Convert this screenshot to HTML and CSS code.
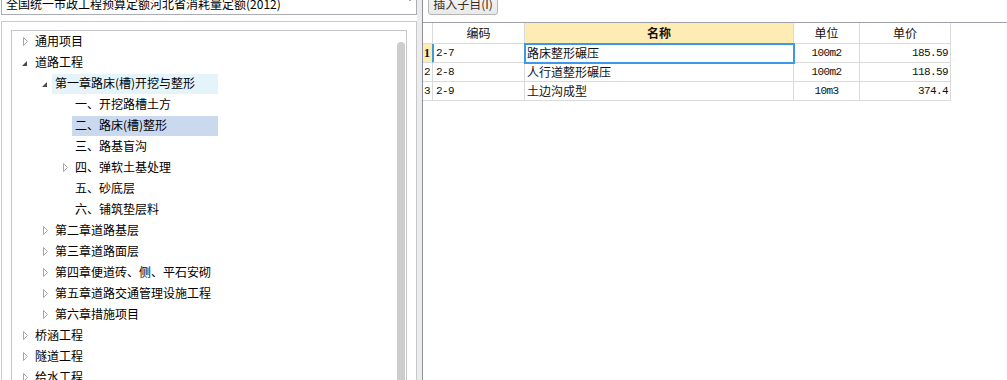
FILE: index.html
```html
<!DOCTYPE html>
<html lang="zh-CN">
<head>
<meta charset="utf-8">
<title>定额库</title>
<link rel="stylesheet" href="styles.css">
</head>
<body>
<div class="left">
  <div class="combo-wrap">
    <div class="combo">
      <span class="combo-text">全国统一市政工程预算定额河北省消耗量定额(2012)</span>
      <svg class="combo-arrow" width="6" height="4" viewBox="0 0 6 4"><path d="M0 0 H6 L3 3 Z" fill="#555"/></svg>
    </div>
  </div>
  <div class="outer">
    <div class="tree-box">
      <div class="tree">
        <div class="row l0"><span class="tw c"><svg width="6" height="9" viewBox="0 0 6 9"><path d="M0.5 0.5 L4.5 4.5 L0.5 8.5 Z" fill="none" stroke="#a6a6a6"/></svg></span><span class="lbl">通用项目</span></div>
        <div class="row l0"><span class="tw e"><svg width="6" height="6" viewBox="0 0 6 6"><path d="M5 0 V5 H0 Z" fill="#4a4a4a"/></svg></span><span class="lbl">道路工程</span></div>
        <div class="row l1"><span class="tw e"><svg width="6" height="6" viewBox="0 0 6 6"><path d="M5 0 V5 H0 Z" fill="#4a4a4a"/></svg></span><span class="lbl hover">第一章路床(槽)开挖与整形</span></div>
        <div class="row l2"><span class="tw"></span><span class="lbl">一、开挖路槽土方</span></div>
        <div class="row l2"><span class="tw"></span><span class="lbl sel">二、路床(槽)整形</span></div>
        <div class="row l2"><span class="tw"></span><span class="lbl">三、路基盲沟</span></div>
        <div class="row l2"><span class="tw c"><svg width="6" height="9" viewBox="0 0 6 9"><path d="M0.5 0.5 L4.5 4.5 L0.5 8.5 Z" fill="none" stroke="#a6a6a6"/></svg></span><span class="lbl">四、弹软土基处理</span></div>
        <div class="row l2"><span class="tw"></span><span class="lbl">五、砂底层</span></div>
        <div class="row l2"><span class="tw"></span><span class="lbl">六、铺筑垫层料</span></div>
        <div class="row l1"><span class="tw c"><svg width="6" height="9" viewBox="0 0 6 9"><path d="M0.5 0.5 L4.5 4.5 L0.5 8.5 Z" fill="none" stroke="#a6a6a6"/></svg></span><span class="lbl">第二章道路基层</span></div>
        <div class="row l1"><span class="tw c"><svg width="6" height="9" viewBox="0 0 6 9"><path d="M0.5 0.5 L4.5 4.5 L0.5 8.5 Z" fill="none" stroke="#a6a6a6"/></svg></span><span class="lbl">第三章道路面层</span></div>
        <div class="row l1"><span class="tw c"><svg width="6" height="9" viewBox="0 0 6 9"><path d="M0.5 0.5 L4.5 4.5 L0.5 8.5 Z" fill="none" stroke="#a6a6a6"/></svg></span><span class="lbl">第四章便道砖、侧、平石安砌</span></div>
        <div class="row l1"><span class="tw c"><svg width="6" height="9" viewBox="0 0 6 9"><path d="M0.5 0.5 L4.5 4.5 L0.5 8.5 Z" fill="none" stroke="#a6a6a6"/></svg></span><span class="lbl">第五章道路交通管理设施工程</span></div>
        <div class="row l1"><span class="tw c"><svg width="6" height="9" viewBox="0 0 6 9"><path d="M0.5 0.5 L4.5 4.5 L0.5 8.5 Z" fill="none" stroke="#a6a6a6"/></svg></span><span class="lbl">第六章措施项目</span></div>
        <div class="row l0"><span class="tw c"><svg width="6" height="9" viewBox="0 0 6 9"><path d="M0.5 0.5 L4.5 4.5 L0.5 8.5 Z" fill="none" stroke="#a6a6a6"/></svg></span><span class="lbl">桥涵工程</span></div>
        <div class="row l0"><span class="tw c"><svg width="6" height="9" viewBox="0 0 6 9"><path d="M0.5 0.5 L4.5 4.5 L0.5 8.5 Z" fill="none" stroke="#a6a6a6"/></svg></span><span class="lbl">隧道工程</span></div>
        <div class="row l0"><span class="tw c"><svg width="6" height="9" viewBox="0 0 6 9"><path d="M0.5 0.5 L4.5 4.5 L0.5 8.5 Z" fill="none" stroke="#a6a6a6"/></svg></span><span class="lbl">给水工程</span></div>
      </div>
      <div class="scroll"><div class="thumb"></div></div>
    </div>
  </div>
</div>
<div class="splitter"></div>
<div class="right">
  <div class="toolbar">
    <button class="btn" type="button">插入子目(I)</button>
  </div>
  <div class="grid">
    <div class="cell hd num"></div>
    <div class="cell hd">编码</div>
    <div class="cell hd cur">名称</div>
    <div class="cell hd">单位</div>
    <div class="cell hd">单价</div>

    <div class="cell num active">1</div>
    <div class="cell code mark">2-7</div>
    <div class="cell name selcell">路床整形碾压</div>
    <div class="cell unit">100m2</div>
    <div class="cell price">185.59</div>

    <div class="cell num">2</div>
    <div class="cell code">2-8</div>
    <div class="cell name">人行道整形碾压</div>
    <div class="cell unit">100m2</div>
    <div class="cell price">118.59</div>

    <div class="cell num">3</div>
    <div class="cell code">2-9</div>
    <div class="cell name">土边沟成型</div>
    <div class="cell unit">10m3</div>
    <div class="cell price">374.4</div>
  </div>
</div>
</body>
</html>
```
FILE: styles.css
```css
html, body {
  margin: 0;
  padding: 0;
  background: #ffffff;
}
body {
  width: 1007px;
  height: 380px;
  overflow: hidden;
  display: flex;
  font-family: "Noto Sans CJK SC", "Liberation Sans", sans-serif;
  font-size: 12px;
  color: #000;
}

/* ---------- left pane ---------- */
.left {
  width: 417px;
  height: 380px;
  flex: none;
  padding-left: 1px;
  box-sizing: border-box;
  display: flex;
  flex-direction: column;
}
.combo-wrap {
  height: 15px;
  overflow: hidden;
  flex: none;
}
.combo {
  height: 22px;
  margin-top: -7px;
  box-sizing: border-box;
  border: 1px solid #abadb3;
  display: flex;
  align-items: center;
  padding: 0 3px 0 4px;
  background: #fff;
}
.combo-text {
  flex: 1;
  white-space: nowrap;
  line-height: 18px;
}
.combo-arrow {
  display: block;
  margin-bottom: 8px;
}
.outer {
  margin-top: 6px;
  flex: 1;
  min-height: 0;
  border: 1px solid #c8c8c8;
  border-bottom: none;
  padding: 8px 9px 0 9px;
  display: flex;
}
.tree-box {
  flex: 1;
  min-height: 0;
  overflow: hidden;
  border: 1px solid #c6c6ce;
  border-bottom: none;
  display: flex;
}
.tree {
  flex: 1;
}
.row {
  width: 206px;
  height: 21px;
  display: flex;
  align-items: stretch;
  box-sizing: border-box;
  padding-top: 1px;
}
.row.l0 { padding-left: 8px; }
.row.l1 { padding-left: 28px; }
.row.l2 { padding-left: 48px; }
.tw {
  width: 12px;
  flex: none;
  display: flex;
  align-items: center;
  padding-left: 3px;
  box-sizing: border-box;
}
.tw svg { display: block; }
.tw.c svg { margin-top: -2px; }
.tw.e svg { margin-top: 2px; margin-left: -1px; }
.lbl {
  flex: 1;
  padding-left: 3px;
  line-height: 18px;
  height: 20px;
  white-space: nowrap;
}
.lbl.hover { background: #e5f3fb; }
.lbl.sel { background: #cbd9ef; }
.scroll {
  width: 11px;
  flex: none;
  display: flex;
  flex-direction: column;
}
.thumb {
  flex: 1;
  margin-top: 11px;
  margin-left: 2px;
  width: 8px;
  background: #cdcdcd;
  border-radius: 4px 4px 0 0;
}

/* ---------- splitter ---------- */
.splitter {
  width: 5px;
  flex: none;
  background: #ececec;
}

/* ---------- right pane ---------- */
.right {
  flex: 1;
  border-left: 1px solid #8b8fa0;
  display: flex;
  flex-direction: column;
}
.toolbar {
  height: 22px;
  overflow: hidden;
  flex: none;
}
.btn {
  display: block;
  margin: -8px 0 0 5px;
  width: 70px;
  height: 23px;
  box-sizing: border-box;
  border: 1px solid #b5b5b5;
  border-radius: 3px;
  background: linear-gradient(#f6f6f6, #e9e9e9);
  font-family: "Noto Sans CJK SC", sans-serif;
  font-size: 12px;
  color: #3a2c1c;
  padding: 0;
  line-height: 20px;
}
.grid {
  border-top: 1px solid #a0a0a8;
  display: grid;
  grid-template-columns: 10px 92px 269px 66px 91px;
  grid-auto-rows: 19px;
  grid-template-rows: 21px;
  align-content: start;
}
.cell {
  box-sizing: border-box;
  border-right: 1px solid #dadada;
  border-bottom: 1px solid #dadada;
  white-space: nowrap;
  overflow: hidden;
  line-height: 18px;
  font-family: "Liberation Mono", "Noto Sans CJK SC", monospace;
  font-size: 11px;
  letter-spacing: -0.6px;
  color: #111;
}
.cell.hd {
  text-align: center;
  line-height: 20px;
  font-family: "Noto Sans CJK SC", sans-serif;
  font-size: 12px;
  letter-spacing: 0;
}
.cell.hd.cur {
  background: #feecb4;
  font-weight: bold;
}
.cell.num {
  padding-left: 1px;
  font-size: 11px;
}
.cell.num.active {
  background: #feecb4;
  font-family: "Liberation Serif", serif;
  font-weight: bold;
  font-size: 12px;
  border-right-color: #3c9ad8;
}
.cell.mark {
  box-shadow: inset 1px 0 0 #3c9ad8;
}
.cell.code {
  padding-left: 3px;
}
.cell.name {
  padding-left: 2px;
  font-family: "Noto Sans CJK SC", sans-serif;
  font-size: 12px;
  letter-spacing: 0;
}
.cell.selcell {
  outline: 2px solid #3d98ea;
  outline-offset: -1px;
  position: relative;
}
.cell.unit {
  text-align: center;
}
.cell.price {
  text-align: right;
  padding-right: 2px;
}
```
